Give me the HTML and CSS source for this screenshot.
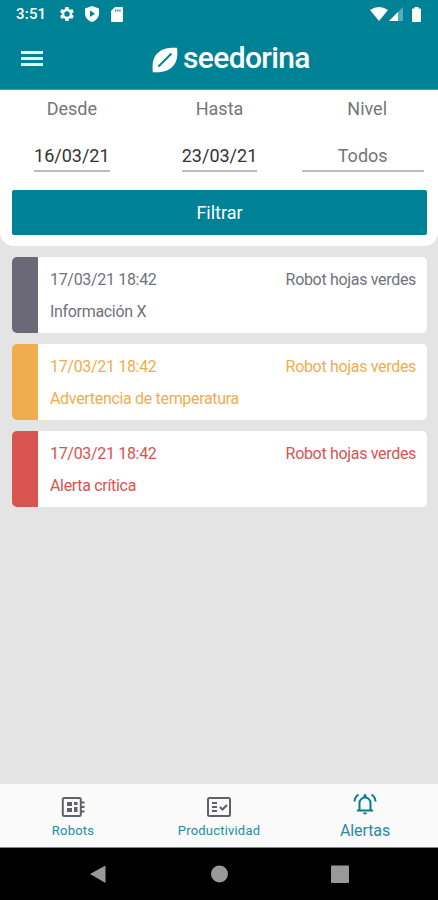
FILE: index.html
```html
<!DOCTYPE html>
<html lang="es">
<head>
    <meta charset="UTF-8">
    <title>Seedorina - Alertas</title>
    <link rel="stylesheet" href="styles.css">
</head>
<body>
    <div class="status">
        <span class="clock">3:51</span>
        <svg class="gear" width="16" height="16" viewBox="3 2 20 20"><path d="M19.4 13a7.500 7.500 0 0 0 0-2l2.100-1.600-2-3.500-2.500 1a7 7 0 0 0-1.700-1L15 3.200h-4l-.4 2.700a7 7 0 0 0-1.700 1l-2.500-1-2 3.500L6.600 11a7.500 7.500 0 0 0 0 2l-2.200 1.600 2 3.500 2.500-1a7 7 0 0 0 1.700 1l.4 2.700h4l.3-2.700a7 7 0 0 0 1.700-1l2.500 1 2-3.500zM13 15.400a3.400 3.400 0 1 1 0-6.800 3.400 3.400 0 0 1 0 6.800z" fill-rule="evenodd"/></svg>
        <svg class="shield" width="16" height="18" viewBox="0 0 16 18"><path d="M8 1L1 3.500V8.500C1 12.500 4 15.800 8 17c4-1.200 7-4.500 7-8.500V3.500zM6 5.500l5 3.200-5 3.200z" fill-rule="evenodd"/></svg>
        <svg class="card-sd" width="12" height="15" viewBox="0 0 12 15"><path d="M4 0h7a1 1 0 0 1 1 1v13a1 1 0 0 1-1 1H1a1 1 0 0 1-1-1V4zM4 2.500v2h1.200v-2zM6.200 2.500v2h1.200v-2zM8.400 2.500v2h1.200v-2z" fill-rule="evenodd"/></svg>
        <svg class="wifi" width="18" height="14" viewBox="0 0 18 14"><path d="M0 3Q9-3 18 3L9 14z"/></svg>
        <svg class="signal" width="14" height="14" viewBox="0 0 14 14"><path d="M14 0v14H0z" opacity=".35"/><path d="M9 5v9H0z"/></svg>
        <svg class="battery" width="9" height="15" viewBox="0 0 9 15"><path d="M2.500 0h4v1.500H8a1 1 0 0 1 1 1V14a1 1 0 0 1-1 1H1a1 1 0 0 1-1-1V2.500a1 1 0 0 1 1-1h1.500z"/></svg>
    </div>
    <div class="header">
        <div class="menu"><i></i><i></i><i></i></div>
        <div class="logo">
            <svg width="26" height="26" viewBox="0 0 26 26"><path d="M25 .8C15 0 7.500 2.500 3.500 8.500 .6 13 .2 18 .8 25.200 11 26 18 23.500 22.300 17.500 25.300 13 25.800 8 25 .8z" fill="#fff"/><path d="M6.500 19.500L19.500 6.500" stroke="#008296" stroke-width="2"/></svg>
            <span>seedorina</span>
        </div>
    </div>
    <div class="filter">
        <div class="fields">
            <div class="field"><label>Desde</label><span class="date">16/03/21</span></div>
            <div class="field"><label>Hasta</label><span class="date">23/03/21</span></div>
            <div class="field"><label>Nivel</label><span class="level">Todos</span></div>
        </div>
        <div class="btn">Filtrar</div>
    </div>
    <div class="list">
        <div class="box info">
            <div class="row"><span>17/03/21 18:42</span><span>Robot hojas verdes</span></div>
            <p>Información X</p>
        </div>
        <div class="box warn">
            <div class="row"><span>17/03/21 18:42</span><span>Robot hojas verdes</span></div>
            <p>Advertencia de temperatura</p>
        </div>
        <div class="box error">
            <div class="row"><span>17/03/21 18:42</span><span>Robot hojas verdes</span></div>
            <p>Alerta crítica</p>
        </div>
    </div>
    <div class="tabs">
        <div class="tab">
            <svg width="24" height="24" viewBox="0 0 24 24" fill="none" stroke="#625f6b"><rect x="1.800" y="3" width="18" height="18" rx="1.500" stroke-width="2"/><path d="M20 7.500h3.500M20 12h3.500M20 16.500h3.500" stroke-width="2"/><path d="M6 7h5v4H6zM6 13h5v4H6zM13 7h3.500v3H13zM13 12h3.500v5H13z" fill="#625f6b" stroke="none"/></svg>
            <span>Robots</span>
        </div>
        <div class="tab">
            <svg width="24" height="24" viewBox="0 0 24 24" fill="none" stroke="#625f6b" stroke-width="2"><rect x="1" y="3" width="22" height="18" rx="1.500"/><path d="M5 8h5M5 12h5M5 16h5M13 12l2.500 2.500L20 10"/></svg>
            <span>Productividad</span>
        </div>
        <div class="tab active">
            <svg width="24" height="24" viewBox="0 0 24 24" fill="none" stroke="#087b8d" stroke-width="2"><path d="M4 18.500h16M6.500 18v-7a5.500 5.500 0 0 1 11 0v7M1.500 9.500Q1.700 5 5.500 2.500M22.500 9.500Q22.300 5 18.500 2.500"/><path d="M10.500 5V3.500a1.500 1.500 0 0 1 3 0V5zM10 20.500h4a2 2 0 0 1-4 0z" fill="#087b8d" stroke="none"/></svg>
            <span>Alertas</span>
        </div>
    </div>
    <div class="nav">
        <svg width="438" height="52" viewBox="0 0 438 52" fill="#999"><path d="M90 26L105.500 17.500V35z"/><circle cx="219.500" cy="26" r="8.500"/><rect x="331" y="17.500" width="18" height="17.500" rx="1"/></svg>
    </div>
</body>
</html>
```
FILE: styles.css
```css
*{
    box-sizing: border-box;
}
body{
    margin: 0;
    width: 438px;
    height: 900px;
    display: flex;
    flex-direction: column;
    background: #e4e4e4;
    font-family: Roboto, sans-serif;
    overflow: hidden;
}
svg{
    display: block;
    flex: none;
}
.status{
    height: 28px;
    display: flex;
    align-items: center;
    padding: 0 16px;
    background: #008296;
    color: #fff;
    fill: #fff;
}
.clock{
    width: 43px;
    font-size: 15px;
    font-weight: 500;
    letter-spacing: 0.2px;
}
.shield{
    margin-left: 9px;
}
.card-sd{
    margin-left: 11px;
}
.wifi{
    margin-left: auto;
}
.signal{
    margin-left: 1px;
}
.battery{
    margin: 0 1px 0 9px;
}
.header{
    height: 62px;
    padding-bottom: 1px;
    display: flex;
    align-items: center;
    background: #008296;
    border-bottom: 1px solid #3f9aaa;
}
.menu{
    width: 22px;
    margin: 0 109px 0 21px;
    display: flex;
    flex-direction: column;
    gap: 3px;
}
.menu i{
    height: 3px;
    background: #e6f3f5;
}
.logo{
    display: flex;
    align-items: center;
    gap: 5px;
    color: #fff;
    font-size: 30px;
    font-weight: 500;
    line-height: 36px;
    letter-spacing: -0.65px;
}
.logo svg{
    margin-top: 4px;
}
.filter{
    height: 156px;
    padding: 8px 11px 0 12px;
    background: #fff;
    border-radius: 0 0 14px 14px;
}
.fields{
    display: flex;
    height: 92px;
    margin: 0 -14px;
}
.field{
    flex: 1;
    display: flex;
    flex-direction: column;
    align-items: center;
    color: #757575;
    font-size: 18px;
    line-height: 22px;
}
.field label{
    margin-bottom: 25px;
}
.date, .level{
    height: 27px;
    border-bottom: 2px solid #bcbcbc;
}
.date{
    color: #333;
}
.level{
    width: 122px;
    text-align: center;
    margin-right: 9px;
}
.btn{
    height: 45px;
    line-height: 46px;
    background: #008296;
    border-radius: 2px;
    color: #fff;
    font-size: 18px;
    text-align: center;
}
.list{
    flex: 1;
    padding: 11px 11px 0 12px;
    display: flex;
    flex-direction: column;
    gap: 11px;
}
.box{
    height: 76px;
    padding: 13px 11px 0 12px;
    background: #fff;
    border-left: 26px solid;
    border-radius: 5px;
    font-size: 16px;
    line-height: 20px;
    letter-spacing: -0.32px;
}
.row{
    display: flex;
    justify-content: space-between;
}
.box p{
    margin: 12px 0 0;
}
.info{
    color: #73717b;
    border-color: #6b6878;
}
.warn{
    color: #f0ad4e;
    border-color: #f0ad4e;
}
.error{
    color: #d9534f;
    border-color: #d9534f;
}
.tabs{
    height: 64px;
    display: flex;
    background: #fafafa;
    border-bottom: 1px solid #888;
}
.tab{
    flex: 1;
    padding-top: 11px;
    display: flex;
    flex-direction: column;
    align-items: center;
    color: #278c9c;
    font-size: 13px;
    line-height: 18px;
    letter-spacing: 0.2px;
    gap: 3px;
}
.active{
    padding-top: 8px;
    font-size: 16px;
    letter-spacing: -0.1px;
    gap: 6px;
}
.nav{
    height: 52px;
    background: #000;
}
```
